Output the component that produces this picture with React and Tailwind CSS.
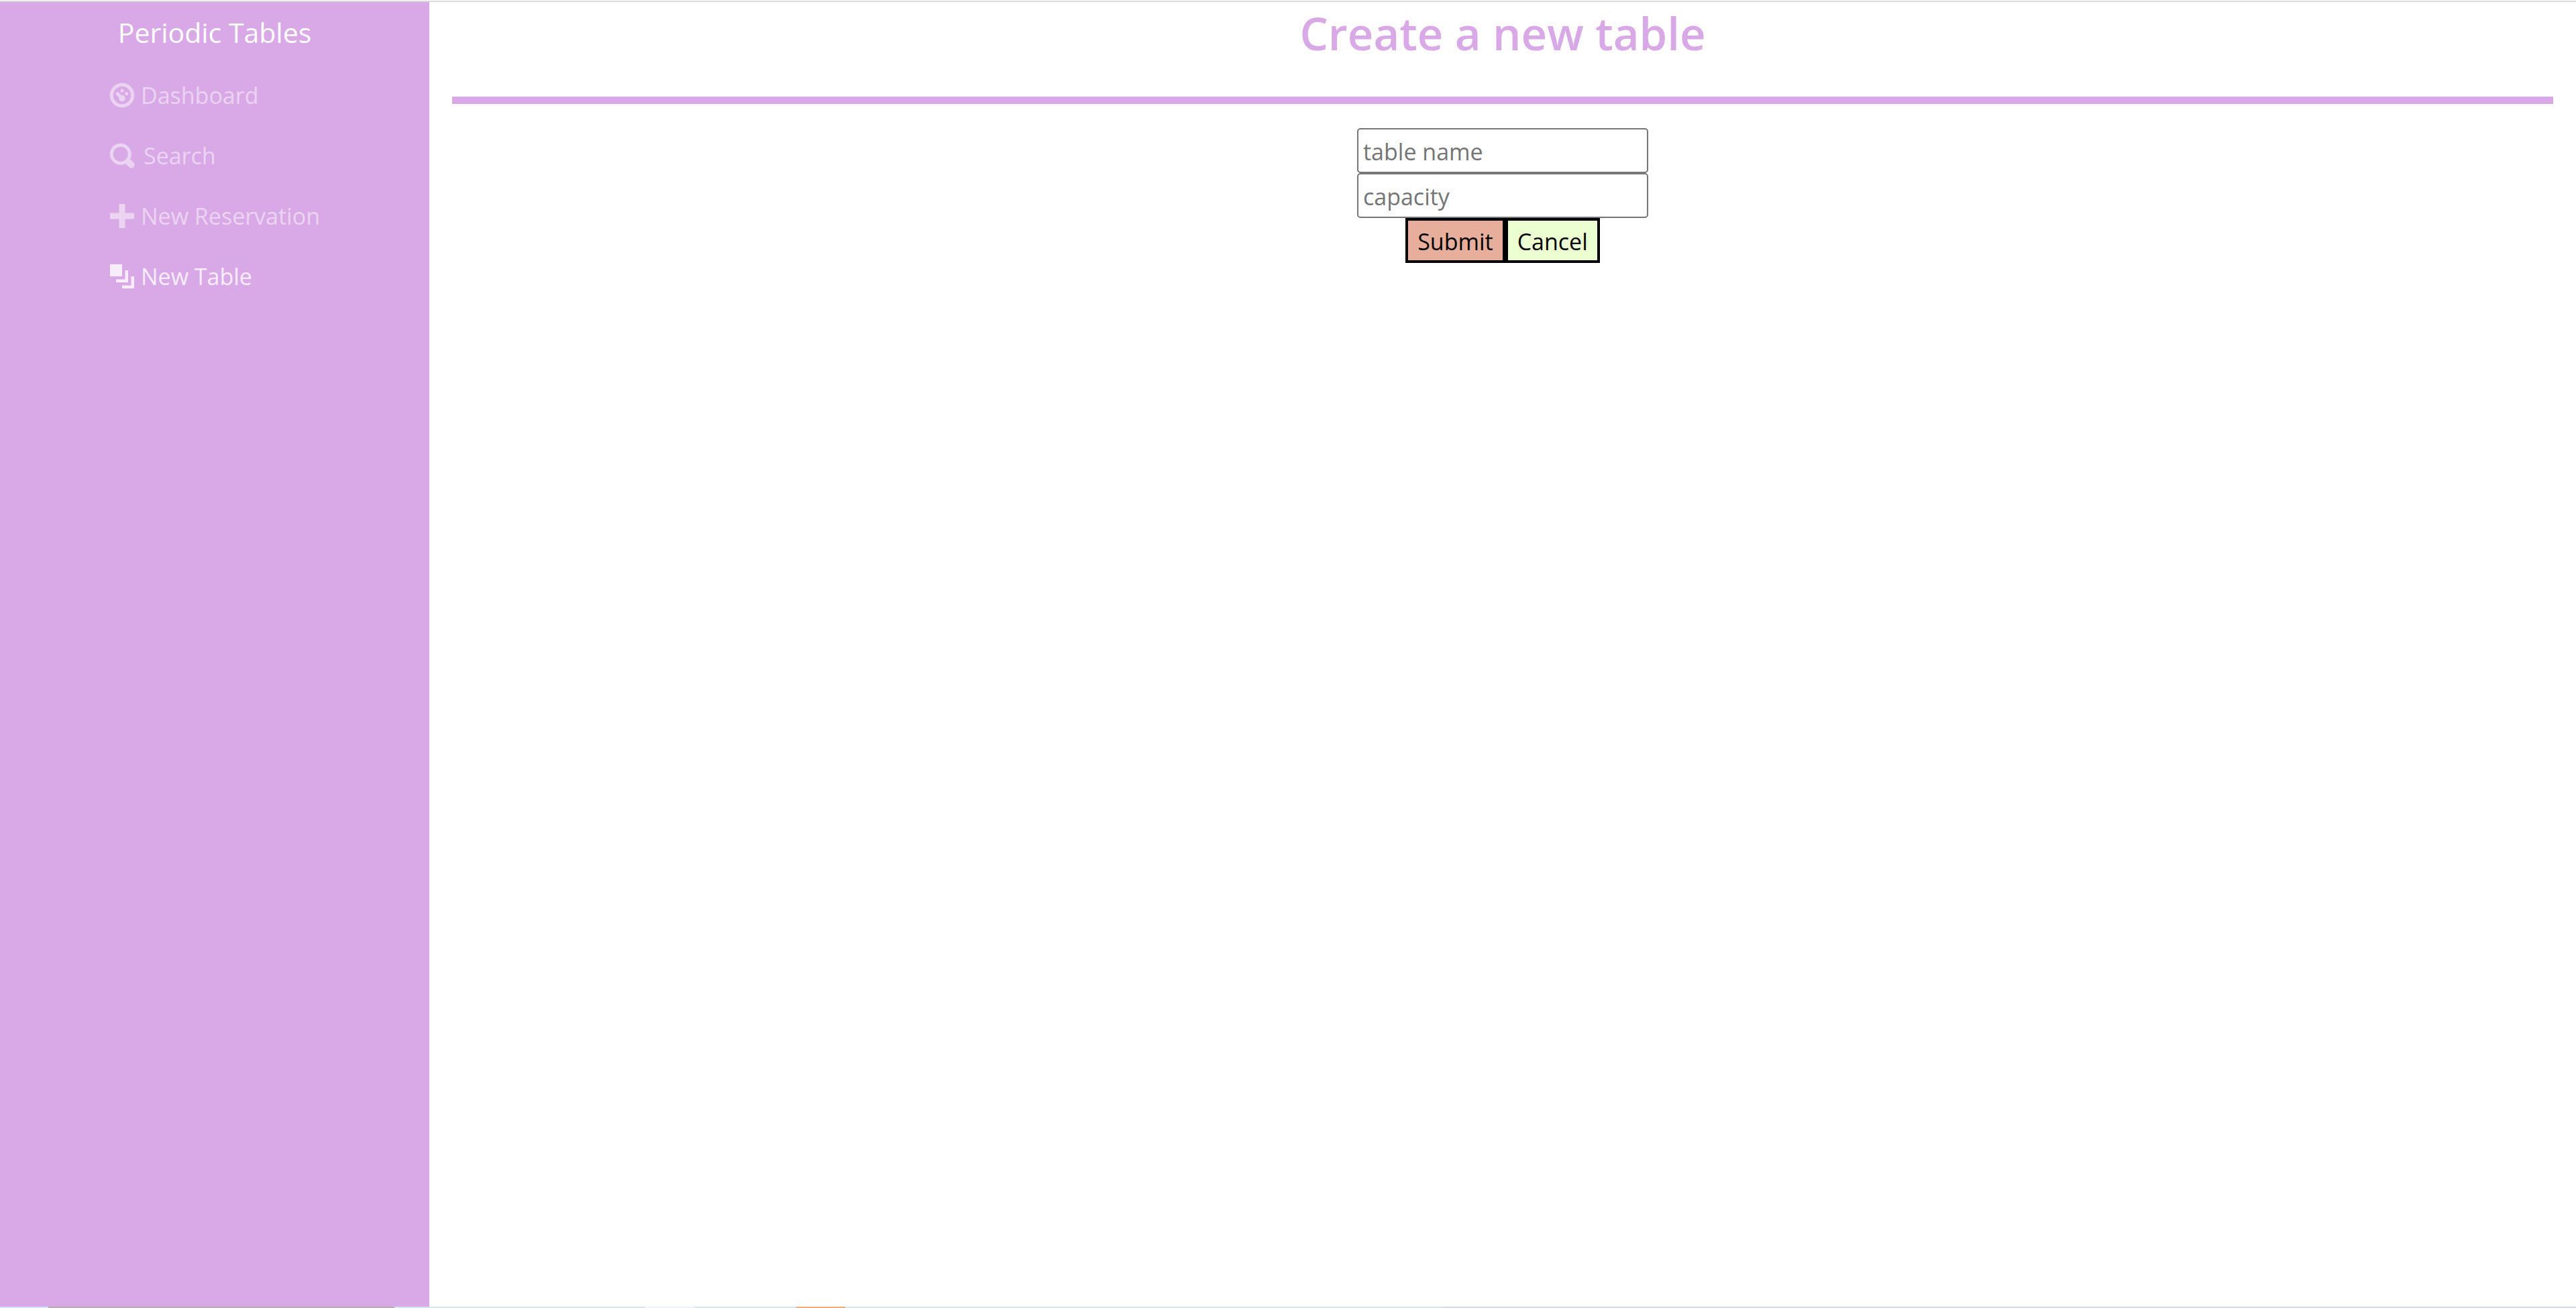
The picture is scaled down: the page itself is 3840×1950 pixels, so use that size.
const icons = {
  dashboard:
    "M4 0c-2.2 0-4 1.8-4 4s1.8 4 4 4 4-1.8 4-4-1.8-4-4-4zm0 1c1.66 0 3 1.34 3 3s-1.34 3-3 3-3-1.34-3-3 1.34-3 3-3zm0 1c-.28 0-.5.22-.5.5s.22.5.5.5.5-.22.5-.5-.22-.5-.5-.5zm-1.66 1a.5.5 0 0 0-.19.84l.91.91c-.02.08-.06.16-.06.25 0 .55.45 1 1 1s1-.45 1-1-.45-1-1-1c-.09 0-.17.04-.25.06l-.91-.91a.5.5 0 0 0-.44-.16.5.5 0 0 0-.06 0zm3.16 0c-.28 0-.5.22-.5.5s.22.5.5.5.5-.22.5-.5-.22-.5-.5-.5z",
  search:
    "M3.5 0c-1.93 0-3.5 1.57-3.5 3.5s1.57 3.5 3.5 3.5c.59 0 1.17-.14 1.66-.41a1 1 0 0 0 .13.13l1 1a1.02 1.02 0 1 0 1.44-1.44l-1-1a1 1 0 0 0-.16-.13c.27-.49.44-1.06.44-1.66 0-1.93-1.55-3.5-3.5-3.5zm0 1c1.39 0 2.5 1.11 2.5 2.5 0 .66-.24 1.27-.66 1.72l-.03.03a1 1 0 0 0-.13.13c-.44.4-1.04.63-1.69.63-1.39 0-2.5-1.11-2.5-2.5s1.11-2.5 2.5-2.5z",
  plus: "M3 0v3h-3v2h3v3h2v-3h3v-2h-3v-3h-2z",
  layers: "M0 0v4h4v-4h-4zm5 2v3h-3v1h4v-4h-1zm2 2v3h-3v1h4v-4h-1z",
};

const links = [
  { label: "Dashboard", icon: "dashboard", gap: "gap-2.5", weight: 0.14 },
  { label: "Search", icon: "search", gap: "gap-3.5", weight: 0.14 },
  { label: "New Reservation", icon: "plus", gap: "gap-2.5", weight: 0 },
  { label: "New Table", icon: "layers", gap: "gap-2.5", weight: 0, active: true },
];

function NavLink({ label, icon, gap, weight, active }) {
  return (
    <li>
      <a
        href="#"
        className={`flex h-[90px] items-center whitespace-nowrap text-white ${gap} ${active ? "opacity-80" : "opacity-50"}`}
      >
        <svg
          viewBox="0 0 8 8"
          stroke="currentColor"
          strokeWidth={weight}
          className="size-9 shrink-0 overflow-visible fill-current"
          aria-hidden="true"
        >
          <path d={icons[icon]} />
        </svg>
        <span>{label}</span>
      </a>
    </li>
  );
}

function Field({ label }) {
  return (
    <input
      aria-label={label}
      placeholder={label}
      className="h-[67px] w-[434px] rounded-[5px] border-2 border-[#767676] px-[7px] pt-0.5 placeholder:text-[#757575]"
    />
  );
}

export default function App() {
  return (
    <div className="flex min-h-screen flex-col border-t border-white bg-white font-['Open_Sans','Noto_Sans',sans-serif] text-[34px] leading-[54px] text-black">
      <div className="h-0.5 bg-[#dadcdc]" />
      <div className="flex flex-1">
        <nav className="flex w-1/6 flex-col items-center bg-[#d8a9e6]">
          <a href="#" className="mt-3 text-[41px] leading-[66px] text-white">
            Periodic Tables
          </a>
          <ul className="mt-4 w-[312px]">
            {links.map((link) => (
              <NavLink key={link.label} {...link} />
            ))}
          </ul>
        </nav>
        <main className="flex-1 px-[34px]">
          <h1 className="pt-1 text-center text-[67px] leading-[84px] font-semibold text-[#d8a9e6]">
            Create a new table
          </h1>
          <hr className="mt-[53px] mb-9 border-t-[11px] border-[#d8a9e6]" />
          <form className="flex flex-col items-center">
            <Field label="table name" />
            <Field label="capacity" />
            <div className="flex">
              <button type="submit" className="h-[67px] border-4 border-black bg-[#e6ae9b] px-3.5 pt-0.5">
                Submit
              </button>
              <button type="button" className="h-[67px] border-4 border-black bg-[#ebffd0] px-3.5 pt-0.5">
                Cancel
              </button>
            </div>
          </form>
        </main>
      </div>
      <div className="flex h-0.5 bg-[#d5e5e9]">
        <div className="w-[72px] bg-[#d5e1f5]" />
        <div className="w-[516px] bg-[#b3b1ad]" />
        <div className="w-[374px]" />
        <div className="w-[73px] bg-[#ecf3f9]" />
        <div className="w-[152px]" />
        <div className="w-[73px] bg-[#efb081]" />
        <div className="w-[890px]" />
        <div className="flex-1 bg-[#d5dce3]" />
      </div>
    </div>
  );
}
